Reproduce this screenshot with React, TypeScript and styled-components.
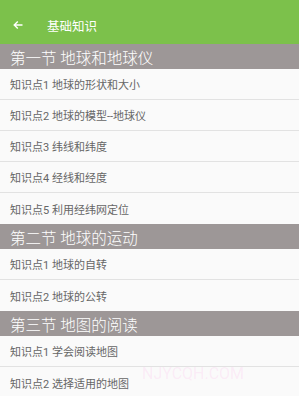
import styled, { createGlobalStyle } from 'styled-components';

const GlobalStyle = createGlobalStyle`
  html, body {
    margin: 0;
    padding: 0;
    background: #fafafa;
  }
  body {
    font-family: Roboto, "Noto Sans CJK SC", "Noto Sans", sans-serif;
  }
`

interface Section {
  title: string;
  items: string[];
}

const sections: Section[] = [
  {
    title: '第一节 地球和地球仪',
    items: [
      '知识点1 地球的形状和大小',
      '知识点2 地球的模型--地球仪',
      '知识点3 纬线和纬度',
      '知识点4 经线和经度',
      '知识点5 利用经纬网定位',
    ],
  },
  {
    title: '第二节 地球的运动',
    items: ['知识点1 地球的自转', '知识点2 地球的公转'],
  },
  {
    title: '第三节 地图的阅读',
    items: ['知识点1 学会阅读地图', '知识点2 选择适用的地图'],
  },
]

const BackArrow = () => (
  <svg width="10" height="10" viewBox="0 0 10 10">
    <path d="M9.5 5H1.2M4.8 1.4L1.2 5l3.6 3.6" stroke="#fff" strokeWidth="1.4" fill="none" />
  </svg>
)

export default function App() {
  return (
    <Page>
      <GlobalStyle />
      <Toolbar>
        <BackButton><BackArrow /></BackButton>
        <ToolbarTitle>基础知识</ToolbarTitle>
      </Toolbar>
      {sections.map(s => (
        <div key={s.title}>
          <SectionHeader>{s.title}</SectionHeader>
          {s.items.map((item, i) => (
            <Row key={item} last={i === s.items.length - 1}>{item}</Row>
          ))}
        </div>
      ))}
      <Watermark>NJYCQH.COM</Watermark>
    </Page>
  )
}

const Page = styled.div`
  position: relative;
  width: 299px;
  height: 396px;
  overflow: hidden;
  background: #fafafa;
`

const Toolbar = styled.div`
  display: flex;
  align-items: center;
  height: 44px;
  padding-top: 6px;
  box-sizing: border-box;
  background: #7cc14b;
`

const BackButton = styled.div`
  display: flex;
  align-items: center;
  justify-content: center;
  width: 10px;
  margin-left: 13px;
`

const ToolbarTitle = styled.span`
  margin-left: 24px;
  color: #fff;
  font-size: 12.5px;
`

const SectionHeader = styled.div`
  display: flex;
  align-items: center;
  height: 25px;
  padding-left: 10px;
  background: #9d9797;
  color: #fff;
  font-size: 15.5px;
  font-weight: 300;
`

const Row = styled.div<{ last?: boolean }>`
  display: flex;
  align-items: center;
  height: ${p => (p.last ? '31px' : '30px')};
  padding-left: 10px;
  border-bottom: ${p => (p.last ? 'none' : '1px solid #e2e2e2')};
  color: #666;
  font-size: 11px;
`

const Watermark = styled.div`
  position: absolute;
  left: 142px;
  top: 364px;
  color: rgba(255, 140, 220, 0.14);
  font-size: 16px;
  pointer-events: none;
`
